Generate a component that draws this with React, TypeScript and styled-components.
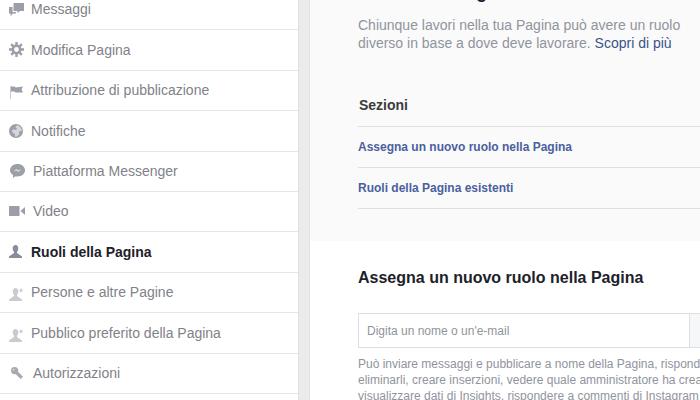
import React from "react";
import styled, { createGlobalStyle } from "styled-components";

const Global = createGlobalStyle`
  html, body { margin: 0; padding: 0; height: 400px; overflow: hidden; background: #fff; }
  body { font-family: "Liberation Sans", Arial, sans-serif; }
  #root { height: 400px; }
`;

const Page = styled.div`
  display: flex;
  width: 700px;
  height: 400px;
  overflow: hidden;
`;

const Sidebar = styled.nav`
  width: 298px;
  flex: none;
  background: #fff;
  margin-top: -10px;
`;

const Row = styled.div`
  box-sizing: border-box;
  height: 40.4px;
  display: flex;
  align-items: center;
  border-bottom: 1px solid #e4e5e8;
  padding: 0 0 0.6px 9px;
`;

const IconSlot = styled.span<{ $w: number; $dy?: number; $dx?: number }>`
  width: ${(p) => p.$w - (p.$dx ?? 0)}px;
  padding-left: ${(p) => p.$dx ?? 0}px;
  padding-top: ${(p) => p.$dy ?? 0}px;
  flex: none;
  display: flex;
  align-items: center;
`;

const RowLabel = styled.span<{ $active?: boolean }>`
  font-size: 14px;
  font-weight: ${(p) => (p.$active ? 700 : 400)};
  color: ${(p) => (p.$active ? "#1d2129" : "#7f8288")};
`;

const Gutter = styled.div`
  width: 12px;
  flex: none;
  box-sizing: border-box;
  background: #ebebec;
  border-left: 1px solid #dedfe1;
  border-right: 1px solid #e2e3e5;
`;

const Main = styled.main`
  flex: 1;
  min-width: 0;
`;

const Upper = styled.section`
  height: 241px;
  box-sizing: border-box;
  background: #fafafb;
  padding: 0 0 0 48px;
  overflow: hidden;
`;

const PageTitle = styled.h2`
  margin: -19px 0 0;
  font-size: 18px;
  line-height: 22px;
  font-weight: 700;
  color: #1d2129;
`;

const Intro = styled.p`
  margin: 13px 0 0;
  width: 330px;
  font-size: 14px;
  line-height: 18px;
  color: #90949c;
`;

const IntroLink = styled.a`
  color: #3b5488;
`;

const SectionsTitle = styled.div`
  margin-top: 45px;
  height: 29px;
  font-size: 14px;
  line-height: 16px;
  font-weight: 700;
  color: #3a3a3d;
  border-bottom: 1px solid #dddfe2;
  padding-left: 1px;
`;

const SectionLink = styled.a`
  display: flex;
  align-items: center;
  height: 40px;
  font-size: 12px;
  font-weight: 700;
  color: #4b5f9e;
  border-bottom: 1px solid #dddfe2;
`;

const Lower = styled.section`
  background: #fff;
  padding: 27px 0 0 48px;
`;

const AssignTitle = styled.h3`
  margin: 0;
  font-size: 16px;
  line-height: 20px;
  font-weight: 700;
  color: #1d2129;
`;

const InputGroup = styled.div`
  display: flex;
  height: 35px;
  margin-top: 25px;
  box-sizing: border-box;
  border: 1px solid #dddfe2;
  border-right: none;
  background: #fff;
`;

const NameInput = styled.input`
  width: 330px;
  flex: none;
  box-sizing: border-box;
  border: none;
  outline: none;
  padding: 0 8px;
  font-family: inherit;
  font-size: 12px;
  background: transparent;
  &::placeholder { color: #90949c; opacity: 1; }
`;

const InputAddon = styled.div`
  flex: 1;
  background: #f6f7f9;
  border-left: 1px solid #dddfe2;
`;

const Help = styled.p`
  margin: 8px 0 0;
  width: 342px;
  font-size: 12px;
  line-height: 16px;
  color: #90949c;
  white-space: nowrap;
`;

const ICON = "#9c9ea8";
const ACTIVE = "#8a8c99";
const FADED = "#c9cbcf";

const Messages = () => (
  <svg width="15" height="13" viewBox="0 0 15 13" fill={ICON}>
    <path d="M4.500 0H15v8h-4l-2.500 2.200V8h-4z" />
    <path d="M0 4h3.500v5H7v1.500H4L1.500 13v-2.500H0z" />
  </svg>
);
const Gear = () => (
  <svg width="15" height="15" viewBox="0 0 15 15" fill="none" stroke={ICON}>
    <circle cx="7.500" cy="7.500" r="3.700" strokeWidth="2.600" />
    <path
      d="M7.500 0v3M7.500 12v3M0 7.500h3M12 7.500h3M2.200 2.200l2.100 2.100M10.700 10.700l2.100 2.100M2.200 12.800l2.100-2.100M10.700 4.300l2.100-2.100"
      strokeWidth="2.400"
    />
  </svg>
);
const Flag = () => (
  <svg width="13" height="14" viewBox="0 0 13 14" fill={ICON}>
    <path d="M0 1h1v13H0z" opacity=".55" />
    <path d="M1 1.500h3.500l1 1L13 1.500l-1.500 3L13 7.500H5.500l-1-1H1z" />
  </svg>
);
const Globe = () => (
  <svg width="14" height="14" viewBox="0 0 14 14">
    <circle cx="7" cy="7" r="7" fill={ICON} />
    <path
      d="M8 1.300 6.200 3l1.800 1.500L7 6 4.500 5.200 2.800 6.500 4 9.300l2 .7v2.700h1.500L10.500 10l-.8-2.500 3-.5A5.800 5.800 0 0 0 8 1.300z"
      fill="#d5d6da"
    />
  </svg>
);
const Bubble = () => (
  <svg width="15" height="14" viewBox="0 0 15 14" fill={ICON}>
    <path d="M7.500 0C11.600 0 15 2.700 15 6.200s-3.400 6.200-7.500 6.200c-.7 0-1.300-.1-1.900-.2L3 14v-3C1.200 9.900 0 8.200 0 6.200 0 2.700 3.400 0 7.500 0z" />
    <path d="M3.500 7.500 6.500 5l2 1.500L11.500 5l-3 3-2-1.500z" fill="#e4e5e8" />
  </svg>
);
const VideoCam = () => (
  <svg width="16" height="10" viewBox="0 0 16 10" fill={ICON}>
    <rect width="10.500" height="10" rx=".5" />
    <path d="M11.500 5 16 1v8z" />
  </svg>
);
const Person = ({ star, color, width }: { star?: boolean; color: string; width: number }) => (
  <svg width={width} height="13" viewBox={`0 0 ${width} 13`} fill={color}>
    <path d="M6.500 0C8.300 0 9.300 1.300 9.300 3.200c0 1.700-.7 2.900-1.300 3.600v1.300L13 11.500V13H0v-1.500L5 8.100V6.800C4.400 6.100 3.700 4.900 3.700 3.200 3.700 1.300 4.700 0 6.500 0z" />
    {star && <path d="M12 0l.7 1.500 1.600.3-1.200 1 .3 1.600-1.400-.8-1.400.8.300-1.600-1.100-1 1.500-.3z" />}
  </svg>
);
const Wrench = () => (
  <svg width="12" height="12" viewBox="0 0 12 12" fill="#a8aab2">
    <circle cx="3.600" cy="3.600" r="3.600" />
    <path d="M4 6.500 6.500 4 12 9.700 9.700 12z" />
    <circle cx="2.700" cy="2.700" r=".9" fill="#d8d9dd" />
  </svg>
);

const items: {
  label: string;
  icon: React.ReactNode;
  slot: number;
  active?: boolean;
  dy?: number;
  dx?: number;
}[] = [
  { label: "Messaggi", icon: <Messages />, slot: 22 },
  { label: "Modifica Pagina", icon: <Gear />, slot: 22 },
  { label: "Attribuzione di pubblicazione", icon: <Flag />, slot: 22, dx: 1, dy: 4 },
  { label: "Notifiche", icon: <Globe />, slot: 22 },
  { label: "Piattaforma Messenger", icon: <Bubble />, slot: 24, dx: 1 },
  { label: "Video", icon: <VideoCam />, slot: 24 },
  { label: "Ruoli della Pagina", icon: <Person color={ACTIVE} width={13} />, slot: 22, active: true },
  { label: "Persone e altre Pagine", icon: <Person star color={FADED} width={15} />, slot: 22, dy: 5 },
  { label: "Pubblico preferito della Pagina", icon: <Person star color={FADED} width={15} />, slot: 22, dy: 5 },
  { label: "Autorizzazioni", icon: <Wrench />, slot: 24, dx: 2 },
  { label: "", icon: null, slot: 22 },
];

export default function App() {
  return (
    <>
      <Global />
      <Page>
        <Sidebar>
          {items.map((it, i) => (
            <Row key={i}>
              <IconSlot $w={it.slot} $dy={it.dy} $dx={it.dx}>
                {it.icon}
              </IconSlot>
              <RowLabel $active={it.active}>{it.label}</RowLabel>
            </Row>
          ))}
        </Sidebar>
        <Gutter />
        <Main>
          <Upper>
            <PageTitle>Ruoli della Pagina</PageTitle>
            <Intro>
              Chiunque lavori nella tua Pagina può avere un ruolo diverso in base a dove deve
              lavorare. <IntroLink>Scopri di più</IntroLink>
            </Intro>
            <SectionsTitle>Sezioni</SectionsTitle>
            <SectionLink>Assegna un nuovo ruolo nella Pagina</SectionLink>
            <SectionLink>Ruoli della Pagina esistenti</SectionLink>
          </Upper>
          <Lower>
            <AssignTitle>Assegna un nuovo ruolo nella Pagina</AssignTitle>
            <InputGroup>
              <NameInput placeholder="Digita un nome o un'e-mail" />
              <InputAddon />
            </InputGroup>
            <Help>
              Può inviare messaggi e pubblicare a nome della Pagina, rispondere ai commenti ed
              <br />
              eliminarli, creare inserzioni, vedere quale amministratore ha creato un post o un
              <br />
              visualizzare dati di Insights, rispondere a commenti di Instagram dalla Pagina
            </Help>
          </Lower>
        </Main>
      </Page>
    </>
  );
}
